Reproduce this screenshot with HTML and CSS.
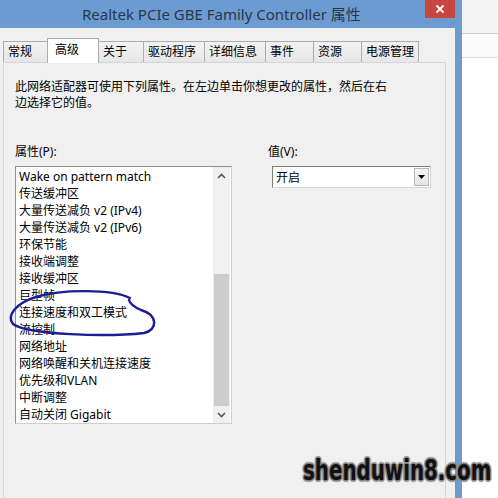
FILE: index.html
```html
<!DOCTYPE html>
<html>
<head>
<meta charset="utf-8">
<link rel="stylesheet" href="styles.css">
</head>
<body>
<div class="desk">
  <div class="window">
    <div class="titlebar">
      <span class="title">Realtek PCIe GBE Family Controller 属性</span>
      <div class="close">
        <svg width="10" height="10" viewBox="0 0 10 10"><path d="M1.5 1.5 L8.5 8.5 M8.5 1.5 L1.5 8.5" stroke="#fff" stroke-width="1.8"/></svg>
      </div>
    </div>
    <div class="frame">
      <div class="client">
        <div class="tabs">
          <div class="tab">常规</div>
          <div class="tab active">高级</div>
          <div class="tab">关于</div>
          <div class="tab">驱动程序</div>
          <div class="tab">详细信息</div>
          <div class="tab">事件</div>
          <div class="tab">资源</div>
          <div class="tab">电源管理</div>
        </div>
        <div class="page">
          <p class="desc">此网络适配器可使用下列属性。在左边单击你想更改的属性，然后在右<br>边选择它的值。</p>
          <div class="cols">
            <div class="col-left">
              <div class="label">属性(P):</div>
              <div class="listbox">
                <ul class="items">
                  <li>Wake on pattern match</li>
                  <li>传送缓冲区</li>
                  <li>大量传送减负 v2 (IPv4)</li>
                  <li>大量传送减负 v2 (IPv6)</li>
                  <li>环保节能</li>
                  <li>接收端调整</li>
                  <li>接收缓冲区</li>
                  <li>巨型帧</li>
                  <li>连接速度和双工模式</li>
                  <li>流控制</li>
                  <li>网络地址</li>
                  <li>网络唤醒和关机连接速度</li>
                  <li>优先级和VLAN</li>
                  <li>中断调整</li>
                  <li>自动关闭 Gigabit</li>
                </ul>
                <div class="scrollbar">
                  <div class="sb-btn"><svg width="9" height="6" viewBox="0 0 9 6"><path d="M1 5 L4.5 1.5 L8 5" fill="none" stroke="#555" stroke-width="1.6"/></svg></div>
                  <div class="sb-track"><div class="sb-thumb"></div></div>
                  <div class="sb-btn"><svg width="9" height="6" viewBox="0 0 9 6"><path d="M1 1 L4.5 4.5 L8 1" fill="none" stroke="#555" stroke-width="1.6"/></svg></div>
                </div>
              </div>
            </div>
            <div class="col-right">
              <div class="label">值(V):</div>
              <div class="select">
                <span class="select-text">开启</span>
                <span class="select-btn"><svg width="7" height="4" viewBox="0 0 7 4"><path d="M0 0 L7 0 L3.5 4 Z" fill="#000"/></svg></span>
              </div>
            </div>
          </div>
        </div>
      </div>
    </div>
  </div>
  <div class="side">
    <div class="side-top"></div>
    <div class="side-mid"></div>
    <div class="side-rest"></div>
  </div>
  <svg class="scribble" width="170" height="60" viewBox="0 0 170 60">
    <path d="M130 13 C 112 4, 62 4, 36 12 C 16 18, 6 31, 13 39 C 28 50, 108 52, 144 48 C 158 45, 158 30, 141 25 C 134 22, 130 19, 129 15" fill="none" stroke="#1c1c95" stroke-width="2.4" stroke-linecap="round"/>
  </svg>
  <div class="watermark">shenduwin8.com</div>
</div>
</body>
</html>
```

FILE: styles.css
```css
* { box-sizing: border-box; }
html, body { margin: 0; padding: 0; }
body {
  width: 498px;
  height: 498px;
  overflow: hidden;
  font-family: "Noto Sans", "Noto Sans CJK SC", sans-serif;
  font-size: 12px;
  color: #000;
}
.desk {
  position: relative;
  display: flex;
  width: 498px;
  height: 498px;
}
.window {
  width: 462px;
  height: 498px;
  display: flex;
  flex-direction: column;
}
.titlebar {
  height: 28px;
  background: #6c9bd2;
  display: flex;
  align-items: flex-start;
}
.title {
  flex: 1;
  padding-left: 82px;
  line-height: 28px;
  font-size: 15px;
  color: #27384a;
  white-space: nowrap;
}
.close {
  width: 30px;
  height: 18px;
  margin-right: 7px;
  background: #c8473f;
  display: flex;
  align-items: center;
  justify-content: center;
}
.frame {
  flex: 1;
  display: flex;
  border-right: 7px solid #6c9bd2;
}
.client {
  flex: 1;
  background: #f0f0f0;
  padding: 10px 9px 0 3px;
  display: flex;
  flex-direction: column;
}
.tabs {
  display: flex;
  align-items: flex-end;
  height: 24px;
}
.tab {
  height: 21px;
  border: 1px solid #acacac;
  border-bottom: none;
  margin-left: -1px;
  padding-left: 4px;
  line-height: 20px;
  background: linear-gradient(#f2f2f2, #e6e6e6);
  white-space: nowrap;
}
.tab:first-child { margin-left: 0; }
.tab:nth-child(1) { width: 45px; }
.tab:nth-child(2) { width: 52px; }
.tab:nth-child(3) { width: 46px; }
.tab:nth-child(4) { width: 62px; }
.tab:nth-child(5) { width: 62px; }
.tab:nth-child(6) { width: 49px; }
.tab:nth-child(7) { width: 49px; }
.tab:nth-child(8) { width: 58px; }
.tab.active {
  height: 25px;
  margin-bottom: -1px;
  background: #fff;
  position: relative;
  z-index: 1;
  padding-left: 7px;
  line-height: 22px;
}
.page {
  flex: 1;
  border: 1px solid #d5d5d5;
  border-bottom: none;
  background: #f0f0f0;
  padding: 16px 11px 0 11px;
}
.desc {
  margin: 0;
  line-height: 16px;
  white-space: nowrap;
}
.cols {
  display: flex;
  gap: 36px;
  margin-top: 33px;
}
.label {
  line-height: 16px;
  margin-bottom: 6px;
}
.col-left { width: 217px; }
.col-right { width: 163px; }
.listbox {
  height: 258px;
  border: 1px solid #8f8f8f;
  border-right-color: #cfcfcf;
  border-bottom-color: #cfcfcf;
  background: #fff;
  display: flex;
}
.items {
  flex: 1;
  list-style: none;
  margin: 0;
  padding: 1px 0 0 3px;
}
.items li {
  height: 17px;
  line-height: 17px;
  white-space: nowrap;
}
.scrollbar {
  width: 17px;
  margin-right: 1px;
  background: #f0f0f0;
  display: flex;
  flex-direction: column;
}
.sb-btn {
  height: 17px;
  display: flex;
  align-items: center;
  justify-content: center;
}
.sb-track {
  flex: 1;
  display: flex;
  flex-direction: column;
  justify-content: flex-end;
  padding: 0 1px;
}
.sb-thumb {
  height: 132px;
  background: #cdcdcd;
}
.select {
  margin-left: 4px;
  width: 159px;
  height: 22px;
  border: 1px solid #7e7e7e;
  border-right-color: #d8d8d8;
  border-bottom-color: #d8d8d8;
  background: #fff;
  display: flex;
  align-items: center;
  padding: 0 1px 0 3px;
}
.select-text { flex: 1; }
.select-btn {
  width: 15px;
  height: 18px;
  border: 1px solid #b8b8b8;
  background: linear-gradient(#f6f6f6, #e4e4e4);
  display: flex;
  align-items: center;
  justify-content: center;
}
.side {
  flex: 1;
  display: flex;
  flex-direction: column;
}
.side-top {
  height: 34px;
  background: #f3f3f3;
  border-bottom: 1px solid #cfcfcf;
}
.side-mid {
  height: 24px;
  background: #fbfbfb;
  border-bottom: 1px solid #dcdcdc;
}
.side-rest {
  flex: 1;
  background: #fff;
}
.scribble {
  position: absolute;
  left: 0;
  top: 285px;
  z-index: 5;
}
.watermark {
  position: absolute;
  left: 303px;
  top: 452px;
  font-family: "DejaVu Sans Condensed", "DejaVu Sans", sans-serif;
  font-weight: bold;
  font-size: 29px;
  line-height: 36px;
  color: #111;
  transform: scaleX(0.76);
  transform-origin: left center;
  white-space: nowrap;
  text-shadow: 0 0 2px #777, 1px 1px 1px #888, -1px -1px 1px #888, 1px -1px 1px #888, -1px 1px 1px #888, 2px 0 1px #999, -2px 0 1px #999, 0 2px 1px #999, 0 -2px 1px #999;
}
```
